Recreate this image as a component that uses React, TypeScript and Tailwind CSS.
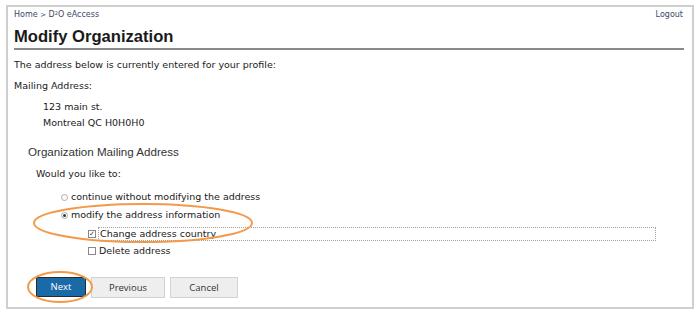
import React from 'react'

const verdana = { fontFamily: '"DejaVu Sans", Verdana, sans-serif' }
const arial = { fontFamily: '"Liberation Sans", Arial, sans-serif' }

export default function App() {
  return (
    <div className="relative w-[700px] h-[320px] bg-white overflow-hidden" style={verdana}>
      <div className="absolute left-[6px] top-[5px] w-[688px] h-[304px] border-2 border-[#cfcfcf] pointer-events-none" />
      <div className="pl-[14px] pr-[16px] pt-[9px]">
        {/* breadcrumb */}
        <div className="flex justify-between text-[8px] text-[#3c4a66] leading-[12px]">
          <span>Home <span className="text-[7px]">&gt;</span> D<sup className="text-[5px]">2</sup>O eAccess</span>
          <span className="pr-[1px]">Logout</span>
        </div>
        <h1
          className="mt-[6px] text-[16.6px] font-bold text-[#1a1a1a] leading-[20px] pb-[1px] border-b-2 border-[#8a8a8a]"
          style={arial}
        >
          Modify Organization
        </h1>

        <div className="text-[9.5px] text-[#1a1a1a] leading-[12px]">
          <p className="mt-[9px]">The address below is currently entered for your profile:</p>
          <p className="mt-[9px]">Mailing Address:</p>
          <div className="mt-[7px] pl-[29px] leading-[16px]">
            <div>123 main st.</div>
            <div>Montreal QC H0H0H0</div>
          </div>
        </div>

        <div className="mt-[13px] pl-[14px] text-[11.6px] text-[#333] leading-[16px]" style={arial}>
          Organization Mailing Address
        </div>

        <div className="pl-[22px] text-[9.5px] text-[#1a1a1a] leading-[12px]">
          <p className="mt-[8px]">Would you like to:</p>
          <div className="mt-[11px] pl-[25px] flex flex-col gap-[6px]">
            <label className="flex items-center gap-[3px]">
              <span className="w-[7px] h-[7px] rounded-full border border-[#aaa] bg-white" />
              <span>continue without modifying the address</span>
            </label>
            <label className="flex items-center gap-[3px]">
              <span className="w-[7px] h-[7px] rounded-full border border-[#aaa] bg-white flex items-center justify-center">
                <span className="w-[3px] h-[3px] rounded-full bg-[#333]" />
              </span>
              <span>modify the address information</span>
            </label>
          </div>
          <div className="mt-[6px] pl-[52px] flex flex-col gap-[4px]">
            <label className="flex items-center gap-[2px]">
              <span className="w-[8px] h-[8px] border border-[#888] bg-white flex items-center justify-center text-[7px] leading-none text-[#333]">✓</span>
              <span className="w-[558px] border border-dotted border-[#a0a0a0] px-[1px] leading-[12px]">Change address country</span>
            </label>
            <label className="flex items-center gap-[3px]">
              <span className="w-[8px] h-[8px] border border-[#888] bg-white" />
              <span>Delete address</span>
            </label>
          </div>

          <div className="mt-[20px] flex gap-[5px] text-[9.5px]" style={{ fontFamily: '"Open Sans", sans-serif' }}>
            <button className="w-[50px] h-[20px] bg-[#1b6aa8] text-white border border-[#2a2a2a]">Next</button>
            <button className="w-[74px] h-[21px] bg-[#eeeeee] text-[#333] border border-[#d2d2d2]">Previous</button>
            <button className="w-[68px] h-[21px] bg-[#eeeeee] text-[#333] border border-[#d2d2d2]">Cancel</button>
          </div>
        </div>
      </div>

      {/* annotation ellipses */}
      <svg className="absolute left-0 top-0 pointer-events-none" width="700" height="320">
        <ellipse cx="143" cy="223" rx="109" ry="19" fill="none" stroke="#f29a4a" strokeWidth="2" />
        <ellipse cx="60" cy="287" rx="32" ry="15" fill="none" stroke="#f29a4a" strokeWidth="2" />
      </svg>
    </div>
  )
}
